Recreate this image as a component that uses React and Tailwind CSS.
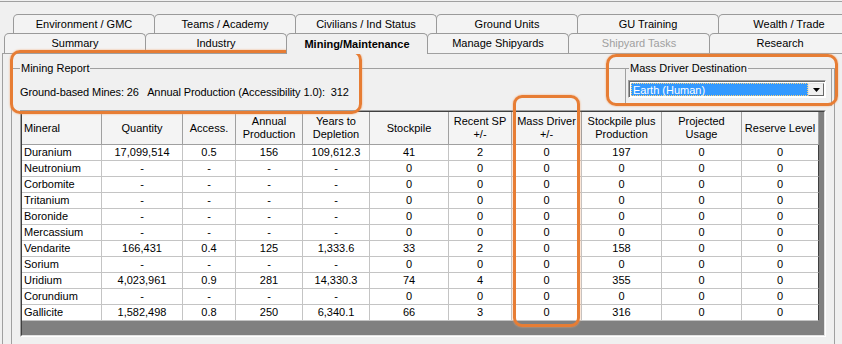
import React from "react";

const topTabs = ["Environment / GMC", "Teams / Academy", "Civilians / Ind Status", "Ground Units", "GU Training", "Wealth / Trade"];
const lowerTabs = ["Summary", "Industry", "Mining/Maintenance", "Manage Shipyards", "Shipyard Tasks", "Research"];

const columns = [
  { label: ["Mineral"], w: "w-[80px]", left: true },
  { label: ["Quantity"], w: "w-[81px]" },
  { label: ["Access."], w: "w-[53px]" },
  { label: ["Annual", "Production"], w: "w-[67px]" },
  { label: ["Years to", "Depletion"], w: "w-[67px]" },
  { label: ["Stockpile"], w: "w-[79px]" },
  { label: ["Recent SP", "+/-"], w: "w-[63px]" },
  { label: ["Mass Driver", "+/-"], w: "w-[70px]" },
  { label: ["Stockpile plus", "Production"], w: "w-[80px]" },
  { label: ["Projected", "Usage"], w: "w-[80px]" },
  { label: ["Reserve Level"], w: "w-[77px]" },
];

const minerals = [
  ["Duranium", "17,099,514", "0.5", "156", "109,612.3", "41", "2", "0", "197", "0", "0"],
  ["Neutronium", "-", "-", "-", "-", "0", "0", "0", "0", "0", "0"],
  ["Corbomite", "-", "-", "-", "-", "0", "0", "0", "0", "0", "0"],
  ["Tritanium", "-", "-", "-", "-", "0", "0", "0", "0", "0", "0"],
  ["Boronide", "-", "-", "-", "-", "0", "0", "0", "0", "0", "0"],
  ["Mercassium", "-", "-", "-", "-", "0", "0", "0", "0", "0", "0"],
  ["Vendarite", "166,431", "0.4", "125", "1,333.6", "33", "2", "0", "158", "0", "0"],
  ["Sorium", "-", "-", "-", "-", "0", "0", "0", "0", "0", "0"],
  ["Uridium", "4,023,961", "0.9", "281", "14,330.3", "74", "4", "0", "355", "0", "0"],
  ["Corundium", "-", "-", "-", "-", "0", "0", "0", "0", "0", "0"],
  ["Gallicite", "1,582,498", "0.8", "250", "6,340.1", "66", "3", "0", "316", "0", "0"],
];

const Tab = ({ label, selected, disabled }) => (
  <div
    className={
      "w-[142px] shrink-0 -mr-px flex items-center justify-center rounded-t-[5px] border-l border-t border-r border-[#9a9a9a] " +
      (selected
        ? "h-[21px] -mb-px relative z-10 bg-[#f0f0f0] font-bold"
        : "h-[20px] bg-[#f3f3f3]") +
      (disabled ? " text-[#a0a0a0]" : "")
    }
  >
    {label}
  </div>
);

const MiningTable = () => (
  <div className="ml-[8px] mt-[4px] w-[806px] border border-[#a0a0a0] border-r-white border-b-white">
    <div className="h-[225px] border border-[#404040] border-r-[#e3e3e3] border-b-[#e3e3e3] bg-[#808080]">
      <div className="flex">
        {columns.map((c, i) => (
          <div
            key={i}
            className={
              c.w +
              " h-[33px] shrink-0 flex flex-col justify-center leading-[13px] bg-[#f4f4f4] border-r border-b border-[#a0a0a0] " +
              (c.left ? "items-start pl-[2px]" : "items-center")
            }
          >
            {c.label.map((l) => (
              <span key={l}>{l}</span>
            ))}
          </div>
        ))}
      </div>
      {minerals.map((row) => (
        <div key={row[0]} className="flex">
          {row.map((v, i) => (
            <div
              key={i}
              className={
                columns[i].w +
                " h-[16px] shrink-0 flex items-center bg-white border-r border-b border-[#c4c4c4] " +
                (i === 0 ? "justify-start pl-[2px]" : "justify-center") +
                (i === row.length - 1 ? " border-r-[#404040]" : "")
              }
            >
              {v}
            </div>
          ))}
        </div>
      ))}
    </div>
  </div>
);

export default function App() {
  return (
    <div className="relative w-[842px] h-[344px] overflow-hidden bg-[#f0f0f0] text-[11px] text-black font-['Liberation_Sans',Arial,sans-serif]">
      <div className="h-[2px] border-b border-[#a0a0a0]" />

      {/* tab strip */}
      <div className="mt-[12px] flex pl-[13px]">
        {topTabs.map((t) => (
          <div key={t} className="w-[142px] h-[19px] shrink-0 -mr-px flex items-center justify-center rounded-t-[5px] border-l border-t border-r border-[#9a9a9a] bg-[#f3f3f3]">
            {t}
          </div>
        ))}
      </div>
      <div className="flex pl-[4px] items-start h-[20px]">
        {lowerTabs.map((t) => (
          <Tab key={t} label={t} selected={t === "Mining/Maintenance"} disabled={t === "Shipyard Tasks"} />
        ))}
      </div>

      {/* tab page */}
      <div className="ml-[2px] h-[300px] border-l border-t border-[#a0a0a0] pt-[8px]">
        <fieldset className="ml-[8px] w-[824px] h-[300px] border border-[#a0a0a0]">
          <legend className="ml-[8px] px-[1px] leading-[13px]">Mining Report</legend>
          <div className="flex items-start">
            <div className="flex-1 pl-[8px] mt-[11px] leading-[13px] whitespace-pre tracking-[-0.1px]">
              {"Ground-based Mines: 26   Annual Production (Accessibility 1.0):  312"}
            </div>
            <fieldset className="w-[207px] mr-[2px] -mt-[13px] border border-[#a0a0a0] pb-[7px] bg-[#f0f0f0]">
              <legend className="ml-[3px] px-[1px] leading-[13px] bg-[#f0f0f0]">Mass Driver Destination</legend>
              <div className="ml-[2px] mt-[5px] w-[198px] h-[18px] flex border border-[#a0a0a0] border-r-white border-b-white">
                <div className="flex-1 flex bg-white p-[1px] border-l border-t border-[#696969]">
                  <div className="flex-1 bg-[#3399ff] text-white pl-[1px] leading-[13px] border border-dotted border-[#ffd27a]">
                    Earth (Human)
                  </div>
                  <div className="w-[16px] flex items-center justify-center bg-[#f0f0f0] border border-[#e3e3e3] border-r-[#696969] border-b-[#696969]">
                    <svg width="7" height="4" viewBox="0 0 7 4">
                      <path d="M0 0h7L3.5 4z" fill="#000" />
                    </svg>
                  </div>
                </div>
              </div>
            </fieldset>
          </div>
          <MiningTable />
        </fieldset>
      </div>

      {/* orange highlight annotations */}
      <div className="absolute left-[10px] top-[50px] w-[352px] h-[64px] rounded-[10px] border-[3px] border-[#e77d34] shadow-[0_0_2px_#f2a46a] pointer-events-none" />
      <div className="absolute left-[606px] top-[54px] w-[232px] h-[52px] rounded-[10px] border-[3px] border-[#e77d34] shadow-[0_0_2px_#f2a46a] pointer-events-none" />
      <div className="absolute left-[513px] top-[95px] w-[67px] h-[232px] rounded-[9px] border-[3px] border-[#e77d34] shadow-[0_0_2px_#f2a46a] pointer-events-none" />
    </div>
  );
}
